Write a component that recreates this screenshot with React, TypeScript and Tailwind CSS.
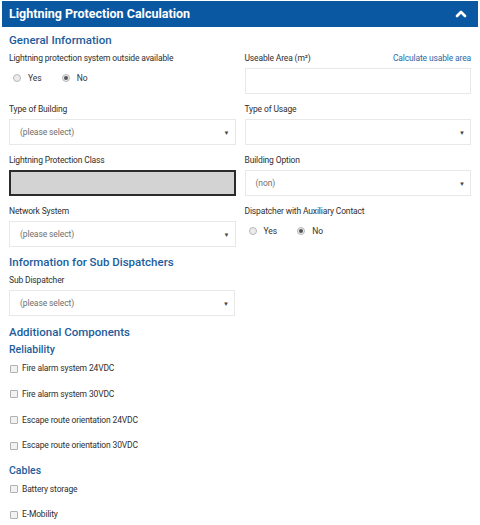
import React from 'react';
import { ChevronUp } from 'lucide-react';

const font = { fontFamily: 'Roboto, "Liberation Sans", sans-serif' };

const Label = ({ children }: { children: React.ReactNode }) => (
  <div className="h-[10px] text-[8.5px] leading-[10px] tracking-[-0.15px] text-[#2f2f2f]">{children}</div>
);

const Select = ({ value }: { value?: string }) => (
  <div className="mt-[5px] flex h-[26px] items-center justify-between border border-[#e8e8e8] bg-white pl-[10px] pr-[5px]">
    <span className="text-[8.5px] tracking-[-0.1px] text-[#6f6f6f]">{value}</span>
    <span className="text-[6px] text-[#444]">▼</span>
  </div>
);

const Radio = ({ label, checked }: { label: string; checked?: boolean }) => (
  <label className="flex items-center gap-[7px]">
    <span className="flex h-[8px] w-[8px] items-center justify-center rounded-full border border-[#b8b8b8] bg-[#ececec]">
      {checked && <span className="h-[4px] w-[4px] rounded-full bg-[#555]" />}
    </span>
    <span className="text-[8.5px] text-[#333]">{label}</span>
  </label>
);

const RadioGroup = () => (
  <div className="mt-[7px] flex h-[16px] items-center gap-[20px] pl-[4px]">
    <Radio label="Yes" />
    <Radio label="No" checked />
  </div>
);

const Check = ({ label }: { label: string }) => (
  <div className="flex h-[25.6px] items-center gap-[4px] pl-[1px]">
    <span className="h-[8px] w-[8px] rounded-[1px] border border-[#b0b0b0] bg-[#f2f2f2]" />
    <span className="text-[8.5px] tracking-[-0.15px] text-[#2f2f2f]">{label}</span>
  </div>
);

const Heading = ({ children, small }: { children: React.ReactNode; small?: boolean }) => (
  <h2 className={`${small ? 'text-[10.5px]' : 'text-[11.5px]'} font-medium leading-[16px] text-[#1c5d9c]`}>{children}</h2>
);

export default function App() {
  return (
    <div className="h-[525px] w-[480px] overflow-hidden bg-white" style={font}>
      <div className="mx-[2px] mt-px flex h-[26px] items-center justify-between bg-[#0a58a1] pl-[7px] pr-[9px]">
        <span className="text-[12.5px] font-bold text-white">Lightning Protection Calculation</span>
        <ChevronUp className="h-[16px] w-[16px] text-white" strokeWidth={4} />
      </div>

      <div className="px-[9px]">
        <div className="mt-[5px]">
          <Heading>General Information</Heading>
        </div>

        <div className="mt-[5px] grid grid-cols-2 gap-x-[9px] gap-y-[10px]">
          <div>
            <Label>Lightning protection system outside available</Label>
            <RadioGroup />
          </div>
          <div>
            <div className="flex items-center justify-between">
              <Label>Useable Area (m²)</Label>
              <span className="text-[8.5px] leading-[10px] tracking-[-0.15px] text-[#2d6aa6]">Calculate usable area</span>
            </div>
            <div className="mt-[5px] h-[26px] border border-[#e8e8e8] bg-white" />
          </div>

          <div>
            <Label>Type of Building</Label>
            <Select value="(please select)" />
          </div>
          <div>
            <Label>Type of Usage</Label>
            <Select />
          </div>

          <div>
            <Label>Lightning Protection Class</Label>
            <div className="mt-[5px] h-[26px] border-2 border-[#2b2b2b] bg-[#d3d3d3]" />
          </div>
          <div>
            <Label>Building Option</Label>
            <Select value="(non)" />
          </div>

          <div>
            <Label>Network System</Label>
            <Select value="(please select)" />
          </div>
          <div>
            <Label>Dispatcher with Auxiliary Contact</Label>
            <RadioGroup />
          </div>
        </div>

        <div className="mt-[7px]">
          <Heading>Information for Sub Dispatchers</Heading>
        </div>
        <div className="mt-[5px] w-[226px]">
          <Label>Sub Dispatcher</Label>
          <Select value="(please select)" />
        </div>

        <div className="mt-[8px]">
          <Heading>Additional Components</Heading>
          <div className="mt-[2px]">
            <Heading small>Reliability</Heading>
          </div>
        </div>
        <div className="-mt-[2px]">
          <Check label="Fire alarm system 24VDC" />
          <Check label="Fire alarm system 30VDC" />
          <Check label="Escape route orientation 24VDC" />
          <Check label="Escape route orientation 30VDC" />
        </div>

        <div className="mt-[5px]">
          <Heading small>Cables</Heading>
        </div>
        <div className="-mt-[3px]">
          <Check label="Battery storage" />
          <Check label="E-Mobility" />
        </div>
      </div>
    </div>
  );
}
